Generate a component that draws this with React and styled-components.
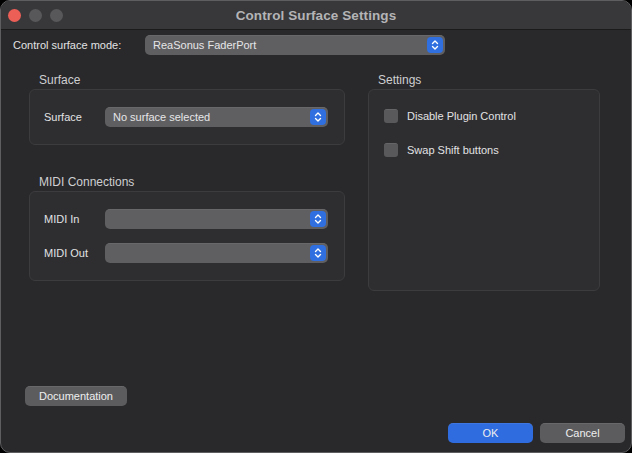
import React from "react";
import styled, { createGlobalStyle } from "styled-components";

const Global = createGlobalStyle`
  html, body { margin: 0; padding: 0; background: #000; }
  * { box-sizing: border-box; }
  body { font-family: "Liberation Sans", Arial, sans-serif; -webkit-font-smoothing: antialiased; }
`;

const Window = styled.div`
  width: 632px;
  height: 453px;
  border: 1px solid #5e5e60;
  border-radius: 10px;
  background: #29292b;
  overflow: hidden;
  display: flex;
  flex-direction: column;
`;

const TitleBar = styled.div`
  height: 29px;
  flex: none;
  background: #38383a;
  border-bottom: 1px solid #1b1b1c;
  display: grid;
  grid-template-columns: 1fr auto 1fr;
  align-items: center;
  padding-left: 7px;
`;

const Lights = styled.div`
  display: flex;
  gap: 8px;
  align-items: center;
`;

const Light = styled.span`
  width: 13px;
  height: 13px;
  border-radius: 50%;
  background: ${(p) => p.$color};
`;

const Title = styled.div`
  font-size: 13.5px;
  font-weight: bold;
  color: #b4b4b6;
  padding-right: 7px;
  letter-spacing: 0.1px;
`;

const Body = styled.div`
  flex: 1;
  display: flex;
  flex-direction: column;
  padding: 5px 6px 9px 0;
`;

const ModeRow = styled.div`
  display: flex;
  align-items: center;
  padding-left: 12px;
  height: 20px;
`;

const ModeLabel = styled.div`
  width: 132px;
  font-size: 11px;
  color: #e2e2e4;
`;

const Popup = styled.div`
  position: relative;
  width: ${(p) => p.$width || "100%"};
  height: 20px;
  border-radius: 5px;
  background: #5f5f61;
  box-shadow: inset 0 0.5px 0 rgba(255, 255, 255, 0.12);
  display: flex;
  align-items: center;
  padding-left: 8px;
  font-size: 11px;
  color: #e6e6e8;
`;

const Stepper = styled.span`
  position: absolute;
  right: 2px;
  top: 2px;
  width: 16px;
  height: 16px;
  border-radius: 4px;
  background: #2f6fdf;
  display: flex;
  align-items: center;
  justify-content: center;
`;

const Columns = styled.div`
  display: flex;
  gap: 23px;
  padding-left: 28px;
  margin-top: 18px;
`;

const Column = styled.div`
  width: ${(p) => p.$width}px;
  display: flex;
  flex-direction: column;
`;

const GroupTitle = styled.div`
  font-size: 12px;
  line-height: 14px;
  color: #cfcfd1;
  padding-left: 10px;
  margin-bottom: 2px;
  margin-top: ${(p) => p.$top || 0}px;
`;

const GroupBox = styled.div`
  border: 1px solid #3c3c3e;
  border-radius: 6px;
  background: #2e2e30;
  height: ${(p) => (p.$height ? `${p.$height}px` : "auto")};
`;

const FormGrid = styled.div`
  display: grid;
  grid-template-columns: 61px 1fr;
  row-gap: 14px;
  align-items: center;
  padding: 17px 16px 17px 14px;
`;

const FieldLabel = styled.div`
  font-size: 11px;
  color: #e2e2e4;
`;

const CheckList = styled.div`
  display: flex;
  flex-direction: column;
  gap: 20px;
  padding: 19px 15px 0 15px;
`;

const CheckRow = styled.label`
  display: flex;
  align-items: center;
  gap: 9px;
  font-size: 11px;
  color: #e2e2e4;
`;

const CheckBox = styled.span`
  width: 14px;
  height: 14px;
  border-radius: 3px;
  background: #59595b;
  box-shadow: inset 0 0.5px 0 rgba(255, 255, 255, 0.15);
`;

const DocRow = styled.div`
  margin-top: auto;
  padding-left: 24px;
`;

const Button = styled.button`
  height: 20px;
  width: ${(p) => p.$width}px;
  border: none;
  border-radius: 5px;
  background: ${(p) => (p.$primary ? "#2f6ce0" : "#5c5c5e")};
  box-shadow: inset 0 0.5px 0 rgba(255, 255, 255, 0.15);
  color: #eeeeef;
  font-family: inherit;
  font-size: 11px;
  padding: 0;
`;

const Footer = styled.div`
  display: flex;
  justify-content: flex-end;
  gap: 7px;
  margin-top: 17px;
`;

const Chevrons = () => (
  <svg width="10" height="12" viewBox="0 0 10 12" fill="none">
    <path d="M2.5 4.5 L5 2 L7.5 4.5" stroke="#fff" strokeWidth="1.4" strokeLinecap="round" strokeLinejoin="round" />
    <path d="M2.5 7.5 L5 10 L7.5 7.5" stroke="#fff" strokeWidth="1.4" strokeLinecap="round" strokeLinejoin="round" />
  </svg>
);

const Select = ({ value, width }) => (
  <Popup $width={width}>
    {value}
    <Stepper>
      <Chevrons />
    </Stepper>
  </Popup>
);

export default function App() {
  return (
    <>
      <Global />
      <Window>
        <TitleBar>
          <Lights>
            <Light $color="#ec5f57" />
            <Light $color="#58585a" />
            <Light $color="#58585a" />
          </Lights>
          <Title>Control Surface Settings</Title>
          <div />
        </TitleBar>
        <Body>
          <ModeRow>
            <ModeLabel>Control surface mode:</ModeLabel>
            <Select value="ReaSonus FaderPort" width="300px" />
          </ModeRow>
          <Columns>
            <Column $width={316}>
              <GroupTitle>Surface</GroupTitle>
              <GroupBox>
                <FormGrid>
                  <FieldLabel>Surface</FieldLabel>
                  <Select value="No surface selected" />
                </FormGrid>
              </GroupBox>
              <GroupTitle $top={30}>MIDI Connections</GroupTitle>
              <GroupBox>
                <FormGrid>
                  <FieldLabel>MIDI In</FieldLabel>
                  <Select value="" />
                  <FieldLabel>MIDI Out</FieldLabel>
                  <Select value="" />
                </FormGrid>
              </GroupBox>
            </Column>
            <Column $width={232}>
              <GroupTitle>Settings</GroupTitle>
              <GroupBox $height={202}>
                <CheckList>
                  <CheckRow>
                    <CheckBox />
                    Disable Plugin Control
                  </CheckRow>
                  <CheckRow>
                    <CheckBox />
                    Swap Shift buttons
                  </CheckRow>
                </CheckList>
              </GroupBox>
            </Column>
          </Columns>
          <DocRow>
            <Button $width={102}>Documentation</Button>
          </DocRow>
          <Footer>
            <Button $primary $width={85}>OK</Button>
            <Button $width={85}>Cancel</Button>
          </Footer>
        </Body>
      </Window>
    </>
  );
}
